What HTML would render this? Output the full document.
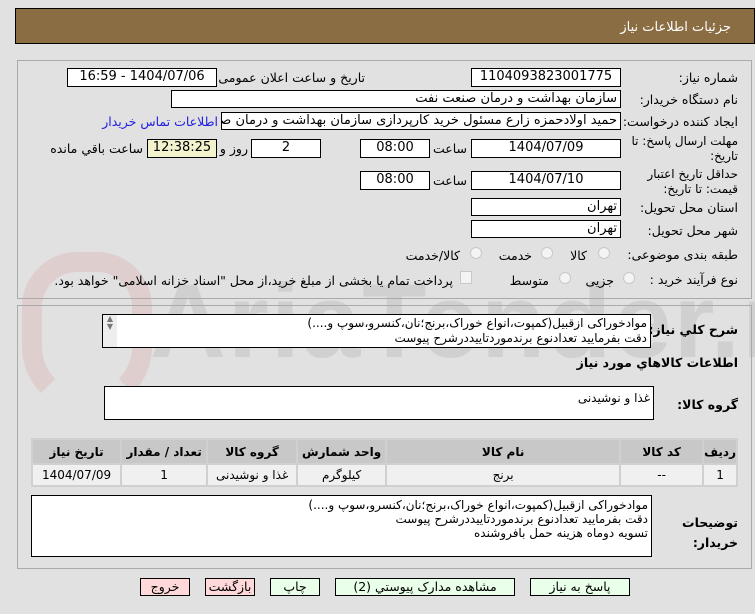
<!DOCTYPE html>
<html><head><meta charset="utf-8"><style>
*{box-sizing:border-box;margin:0;padding:0}
body{width:755px;height:614px;background:#e1e1e1;font-family:"DejaVu Sans","Liberation Sans",sans-serif;font-size:12px;color:#000;position:relative;overflow:hidden}
.a{position:absolute}
.lab{position:absolute;direction:rtl;text-align:right;white-space:nowrap;font-size:12.5px}
.box{position:absolute;background:#fff;border:1px solid #000;direction:rtl;font-size:13px;line-height:16px;padding:0 3px;white-space:nowrap;overflow:hidden}
.c{text-align:center}
.btn{position:absolute;top:578px;height:18px;border:1px solid #000;background:#eaffea;font-size:12.5px;text-align:center;line-height:16px;direction:rtl}
.red{background:#ffd9d9}
table{border-collapse:separate;border-spacing:2px;background:#d0d0d0}
td{font-size:12px;text-align:center;direction:rtl}
.hd td{background:#c8c8c8;font-weight:bold;height:23px}
.dr td{background:#f0f0f0;height:20px}
.rd{position:absolute;width:12px;height:12px;border-radius:50%;border:1px solid #c8c8c8;background:#f4f4f4}
</style></head><body>
<!-- watermark -->
<div class="a" style="left:22px;top:252px;width:130px;height:160px;border:20px solid rgba(220,140,140,.22);border-radius:55px 55px 65px 65px;border-bottom-color:transparent"></div>
<div class="a" style="left:150px;top:262px;font-size:105px;font-weight:bold;color:rgba(150,150,150,.22);font-family:'Liberation Sans',sans-serif;letter-spacing:2px;white-space:nowrap">AriaTender.net</div>

<div class="a" style="left:15px;top:8px;width:740px;height:36px;background:#8b6d43;border:1px solid #000"></div>
<div class="lab" style="right:24px;top:20px;color:#fff;font-size:13px">جزئیات اطلاعات نیاز</div>

<div class="a" style="left:17px;top:60px;width:735px;height:239px;border:1px solid #aaa"></div>
<div class="a" style="left:17px;top:305px;width:735px;height:264px;border:1px solid #aaa"></div>

<div class="lab" style="right:17px;top:70px">شماره نیاز:</div>
<div class="box c" style="left:471px;top:68px;width:150px;height:19px">1104093823001775</div>
<div class="lab" style="right:390px;top:70px">تاریخ و ساعت اعلان عمومی:</div>
<div class="box c" style="left:67px;top:68px;width:150px;height:19px">1404/07/06 - 16:59</div>

<div class="lab" style="right:17px;top:92px">نام دستگاه خریدار:</div>
<div class="box" style="left:171px;top:90px;width:450px;height:18px">سازمان بهداشت و درمان صنعت نفت</div>

<div class="lab" style="right:17px;top:114px">ایجاد کننده درخواست:</div>
<div class="box" style="left:221px;top:112px;width:400px;height:18px">حمید اولادحمزه زارع مسئول خرید کارپردازی سازمان بهداشت و درمان صنعت نفت</div>
<div class="lab" style="right:537px;top:114px;color:#2020e0">اطلاعات تماس خریدار</div>

<div class="lab" style="right:17px;top:134px;line-height:15px;font-size:12px">مهلت ارسال پاسخ: تا<br>تاریخ:</div>
<div class="box c" style="left:471px;top:139px;width:150px;height:19px">1404/07/09</div>
<div class="lab" style="right:288px;top:141px">ساعت</div>
<div class="box c" style="left:360px;top:139px;width:70px;height:19px">08:00</div>
<div class="box c" style="left:251px;top:139px;width:70px;height:19px">2</div>
<div class="lab" style="right:507px;top:141px">روز و</div>
<div class="box c" style="left:147px;top:139px;width:70px;height:19px;background:#f2f2cc">12:38:25</div>
<div class="lab" style="right:612px;top:141px">ساعت باقي مانده</div>

<div class="lab" style="right:17px;top:167px;line-height:15px;font-size:12px">حداقل تاریخ اعتبار<br>قیمت: تا تاریخ:</div>
<div class="box c" style="left:471px;top:171px;width:150px;height:19px">1404/07/10</div>
<div class="lab" style="right:288px;top:173px">ساعت</div>
<div class="box c" style="left:360px;top:171px;width:70px;height:19px">08:00</div>

<div class="lab" style="right:17px;top:200px">استان محل تحویل:</div>
<div class="box" style="left:471px;top:198px;width:150px;height:18px">تهران</div>
<div class="lab" style="right:17px;top:223px">شهر محل تحویل:</div>
<div class="box" style="left:471px;top:220px;width:150px;height:18px">تهران</div>

<div class="lab" style="right:17px;top:247px">طبقه بندی موضوعی:</div>
<div class="rd" style="left:598px;top:247px"></div><div class="lab" style="right:168px;top:248px">کالا</div>
<div class="rd" style="left:541px;top:247px"></div><div class="lab" style="right:223px;top:248px">خدمت</div>
<div class="rd" style="left:470px;top:247px"></div><div class="lab" style="right:295px;top:248px">کالا/خدمت</div>

<div class="lab" style="right:17px;top:272px">نوع فرآیند خرید :</div>
<div class="rd" style="left:623px;top:272px"></div><div class="lab" style="right:141px;top:273px">جزیی</div>
<div class="rd" style="left:559px;top:272px"></div><div class="lab" style="right:206px;top:273px">متوسط</div>
<div class="a" style="left:460px;top:271px;width:12px;height:13px;border:1px solid #c8c8c8;background:#f4f4f4"></div>
<div class="lab" style="right:302px;top:273px">پرداخت تمام یا بخشی از مبلغ خرید،از محل "اسناد خزانه اسلامی" خواهد بود.</div>

<div class="lab" style="right:17px;top:322px;font-weight:bold">شرح کلي نیاز:</div>
<div class="box" style="left:102px;top:314px;width:549px;height:34px;white-space:normal;font-size:12px;line-height:15px;padding-top:1px">موادخوراکی ازقبیل(کمپوت،انواع خوراک،برنج؛نان،کنسرو،سوپ و....)<br>دقت بفرمایید تعدادنوع برندموردتاییددرشرح پیوست</div>
<div class="a" style="left:103px;top:315px;width:14px;height:32px;background:#eee;font-size:8px;color:#777;line-height:8px;text-align:center">▲<br>▼</div>

<div class="lab" style="right:17px;top:355px;font-weight:bold">اطلاعات کالاهاي مورد نیاز</div>
<div class="lab" style="right:17px;top:397px;font-weight:bold">گروه کالا:</div>
<div class="box" style="left:104px;top:386px;width:550px;height:34px;padding-top:3px;font-size:12px">غذا و نوشیدنی</div>

<table class="a" style="left:31px;top:438px;width:707px;direction:rtl">
<tr class="hd"><td style="width:27px">ردیف</td><td style="width:81px">کد کالا</td><td style="width:232px">نام کالا</td><td style="width:87px">واحد شمارش</td><td style="width:88px">گروه کالا</td><td style="width:84px">تعداد / مقدار</td><td>تاریخ نیاز</td></tr>
<tr class="dr"><td>1</td><td>--</td><td>برنج</td><td>کیلوگرم</td><td>غذا و نوشیدنی</td><td>1</td><td>1404/07/09</td></tr>
</table>

<div class="lab" style="right:17px;top:513px;font-weight:bold;line-height:20px">توضیحات<br>خریدار:</div>
<div class="box" style="left:31px;top:495px;width:621px;height:62px;white-space:normal;font-size:12px;line-height:14px;padding-top:2px">موادخوراکی ازقبیل(کمپوت،انواع خوراک،برنج؛نان،کنسرو،سوپ و....)<br>دقت بفرمایید تعدادنوع برندموردتاییددرشرح پیوست<br>تسویه دوماه هزینه حمل بافروشنده</div>

<div class="btn" style="left:530px;width:100px">پاسخ به نیاز</div>
<div class="btn" style="left:335px;width:180px">مشاهده مدارک پیوستي (2)</div>
<div class="btn" style="left:270px;width:50px">چاپ</div>
<div class="btn red" style="left:205px;width:50px">بازگشت</div>
<div class="btn red" style="left:140px;width:50px">خروج</div>
</body></html>
